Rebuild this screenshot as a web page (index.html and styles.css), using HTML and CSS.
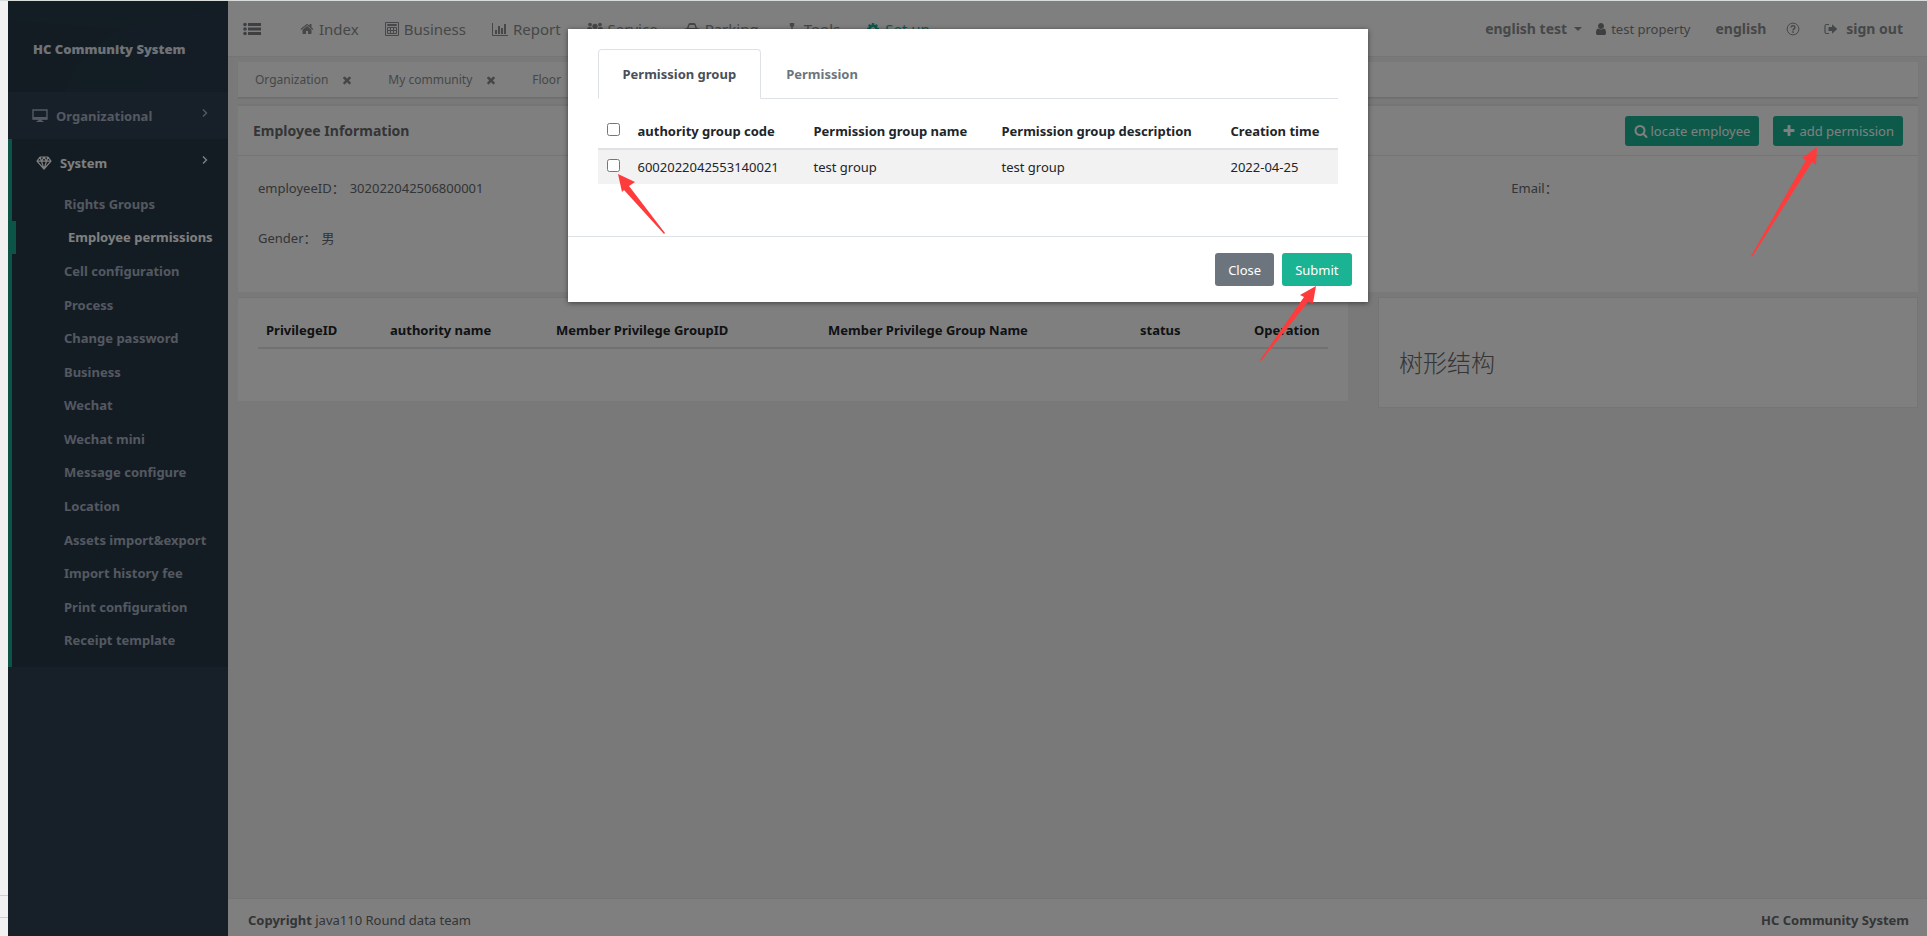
FILE: index.html
```html
<!DOCTYPE html>
<html lang="en">
<head>
  <meta charset="UTF-8" />
  <meta name="viewport" content="width=device-width, initial-scale=1.0" />
  <title>HC Community System</title>
  <link rel="stylesheet" href="styles.css">
</head>
<body>
  <div class="page-edge">
    <span class="edge-line"></span>
  </div>

  <div class="app">
    <nav class="sidebar">
      <div class="sidebar-header">
        <svg class="header-pattern" viewBox="0 0 220 91" preserveAspectRatio="none">
          <path d="M0 0H220V91H0z" fill="#263a48" />
          <path d="M0 20L110 28L70 62L56 91H0z" fill="#273646" />
          <path d="M110 28L220 0V91H156L135 62z" fill="#28394a" />
        </svg>
        <strong class="brand">HC Community System</strong>
      </div>
      <ul class="side-menu">
        <li class="menu-group">
          <a href="#" class="menu-link">
            <svg class="menu-icon" viewBox="0 0 16 14"><path d="M1 1h14v9H1z" fill="none" stroke="currentColor" stroke-width="1.4" /><path d="M1 8h14v2.500H1zM6 10h4v2h1.500v1h-7v-1H6z" /></svg>
            <span>Organizational</span>
            <svg class="menu-arrow" viewBox="0 0 6 10"><path d="M1 1.500l3.500 3.500L1 8.500" /></svg>
          </a>
        </li>
        <li class="menu-group active">
          <a href="#" class="menu-link">
            <svg class="menu-icon" viewBox="0 0 16 14"><path d="M4 1h8l3 4.200L8 13 1 5.200zM1 5.200h14M4 1l1.500 4.200L8 13l2.500-7.800L12 1M5.500 5.200L8 1l2.500 4.200" fill="none" stroke="currentColor" stroke-width="1.200" stroke-linejoin="round" /></svg>
            <span>System</span>
            <svg class="menu-arrow" viewBox="0 0 6 10"><path d="M1 1.500l3.500 3.500L1 8.500" /></svg>
          </a>
          <ul class="sub-menu">
            <li><a href="#">Rights Groups</a></li>
            <li class="current"><a href="#">Employee permissions</a></li>
            <li><a href="#">Cell configuration</a></li>
            <li><a href="#">Process</a></li>
            <li><a href="#">Change password</a></li>
            <li><a href="#">Business</a></li>
            <li><a href="#">Wechat</a></li>
            <li><a href="#">Wechat mini</a></li>
            <li><a href="#">Message configure</a></li>
            <li><a href="#">Location</a></li>
            <li><a href="#">Assets import&amp;export</a></li>
            <li><a href="#">Import history fee</a></li>
            <li><a href="#">Print configuration</a></li>
            <li><a href="#">Receipt template</a></li>
          </ul>
        </li>
      </ul>
    </nav>

    <div class="page">
      <header class="topbar">
        <button type="button" class="toggle" aria-label="Toggle menu">
          <svg viewBox="0 0 18 14"><path d="M5 1h13v3H5zM5 5.500h13v3H5zM5 10h13v3H5z" /><circle cx="2" cy="2.500" r="1.800" /><circle cx="2" cy="7" r="1.800" /><circle cx="2" cy="11.500" r="1.800" /></svg>
        </button>
        <nav class="top-menu">
          <a href="#"><svg class="icon" viewBox="0 0 1792 1792"><path d="M1472 992v480q0 26-19 45t-45 19h-384v-384h-256v384h-384q-26 0-45-19t-19-45v-480q0-1 .5-3t.5-3l575-474 575 474q1 2 1 6zm223-69l-62 74q-8 9-21 11h-3q-13 0-21-7l-692-577-692 577q-12 8-24 7-13-2-21-11l-62-74q-8-10-7-23.500t11-21.500l719-599q32-26 76-26t76 26l244 204v-195q0-14 9-23t23-9h192q14 0 23 9t9 23v408l219 182q10 8 11 21.500t-7 23.500z" /></svg>Index</a>
          <a href="#"><svg class="icon" viewBox="0 0 14 14"><path d="M.5.5h13v13H.5zM2.500 5.500h9v6h-9zM2.500 8.500h9M5.500 5.500v6M8.500 5.500v6M2.500 2.500h9v1h-9z" fill="none" stroke="currentColor" /></svg>Business</a>
          <a href="#"><svg class="icon wide" viewBox="0 0 16 14"><path d="M.5 1v12.500H16" fill="none" stroke="currentColor" /><path d="M3 8h2v4H3zM6 4h2v8H6zM9 6h2v6H9zM12 2h2v10h-2z" /></svg>Report</a>
          <a href="#"><svg class="icon wide" viewBox="0 0 16 14"><circle cx="3" cy="2.600" r="1.900" /><circle cx="13" cy="2.600" r="1.900" /><circle cx="8" cy="4.300" r="2.600" /><path d="M0 8q0-3 2-3l2.500.5Q5 7 6 7.500H3.500L2.500 9H1Q0 9 0 8zM16 8q0-3-2-3l-2.500.5Q11 7 10 7.500h2.500l1 1.500H15q1 0 1-1zM3.500 12q0-4.500 2.300-4.500Q8 9.500 10.200 7.500q2.300 0 2.300 4.500 0 2-1.500 2H5q-1.500 0-1.500-2z" /></svg>Service</a>
          <a href="#"><svg class="icon wide" viewBox="0 0 16 14"><path d="M1 6.500L3 6l1.200-3.500Q4.500 1 6 1h4q1.500 0 1.800 1.500L13 6l2 .5q1 .5 1 2V12h-2v1h-2v-1H4v1H2v-1H0V8.500q0-1.500 1-2zM4.600 6h6.800l-1-3H5.600z" /></svg>Parking</a>
          <a href="#"><svg class="icon" viewBox="0 0 14 14"><path d="M4.800 1h4.400v3.500H7.700V7h4.500v2.500h1.600v3.500H9.400V9.500h1.400V8.300H3.200v1.200h1.400V13H.2V9.500h1.600V7h4.500V4.500H4.800z" /></svg>Tools</a>
          <a href="#" class="selected"><svg class="icon" viewBox="0 0 1792 1792"><path d="M1152 896q0-106-75-181t-181-75-181 75-75 181 75 181 181 75 181-75 75-181zm512-109v222q0 12-8 23t-20 13l-185 28q-19 54-39 91 35 50 107 138 10 12 10 25t-9 23q-27 37-99 108t-94 71q-12 0-26-9l-138-108q-44 23-91 38-16 136-29 186-7 28-36 28h-222q-14 0-24.500-8.500t-11.500-21.500l-28-184q-49-16-90-37l-141 107q-10 9-25 9-14 0-25-11-126-114-165-168-7-10-7-23 0-12 8-23 15-21 51-66.500t54-70.500q-27-50-41-99l-183-27q-13-2-21-12.500t-8-23.500v-222q0-12 8-23t19-13l186-28q14-46 39-92-40-57-107-138-10-12-10-24 0-10 9-23 26-36 98.500-107.500t94.500-71.500q13 0 26 10l138 107q44-23 91-38 16-136 29-186 7-28 36-28h222q14 0 24.500 8.500t11.500 21.500l28 184q49 16 90 37l142-107q9-9 24-9 13 0 25 10 129 119 165 170 7 8 7 22 0 12-8 23-15 21-51 66.500t-54 70.500q26 50 41 98l183 28q13 2 21 12.500t8 23.500z" /></svg>Set up</a>
        </nav>
        <div class="user-menu">
          <a href="#" class="account">english test <span class="caret"></span></a>
          <a href="#" class="property"><svg class="icon" viewBox="0 0 1792 1792"><path d="M1536 1399q0 109-62.500 187t-150.500 78h-854q-88 0-150.500-78t-62.500-187q0-85 8.500-160.500t31.500-152 58.500-131 94-89 134.500-34.500q131 128 313 128t313-128q76 0 134.500 34.500t94 89 58.500 131 31.500 152 8.500 160.500zm-256-887q0 159-112.500 271.500t-271.500 112.500-271.500-112.500-112.500-271.500 112.500-271.500 271.500-112.500 271.500 112.500 112.500 271.500z" /></svg>test property</a>
          <a href="#">english</a>
          <a href="#" aria-label="Help"><svg class="icon" viewBox="0 0 14 14"><circle cx="7" cy="7" r="5.900" fill="none" stroke="currentColor" /><path d="M5 5.500Q5.200 3.700 7 3.700T9 5.400Q9 6.500 7.900 7T7 8.500" fill="none" stroke="currentColor" stroke-width="1.400" /><path d="M6.200 9.300h1.600v1.500H6.200z" /></svg></a>
          <a href="#" class="sign-out"><svg class="icon" viewBox="0 0 14 14"><path d="M5 2.500H2.500Q1 2.500 1 4v6q0 1.500 1.500 1.500H5" fill="none" stroke="currentColor" stroke-width="1.200" /><path d="M4.500 5H8V2.300L13.300 7 8 11.700V9H4.500z" /></svg>sign out</a>
        </div>
      </header>

      <div class="tab-strip">
        <a href="#">Organization <svg viewBox="0 0 1792 1792"><path d="M1490 1322q0 40-28 68l-136 136q-28 28-68 28t-68-28l-294-294-294 294q-28 28-68 28t-68-28l-136-136q-28-28-28-68t28-68l294-294-294-294q-28-28-28-68t28-68l136-136q28-28 68-28t68 28l294 294 294-294q28-28 68-28t68 28l136 136q28 28 28 68t-28 68l-294 294 294 294q28 28 28 68z" /></svg></a>
        <a href="#">My community <svg viewBox="0 0 1792 1792"><path d="M1490 1322q0 40-28 68l-136 136q-28 28-68 28t-68-28l-294-294-294 294q-28 28-68 28t-68-28l-136-136q-28-28-28-68t28-68l294-294-294-294q-28-28-28-68t28-68l136-136q28-28 68-28t68 28l294 294 294-294q28-28 68-28t68 28l136 136q28 28 28 68t-28 68l-294 294 294 294q28 28 28 68z" /></svg></a>
        <a href="#">Floor</a>
      </div>

      <main class="content">
        <section class="panel employee">
          <div class="panel-title">
            <h5>Employee Information</h5>
            <div class="tools">
              <button type="button" class="btn btn-primary btn-sm"><svg class="icon" viewBox="0 0 1792 1792"><path d="M1216 832q0-185-131.500-316.500t-316.500-131.500-316.500 131.500-131.500 316.500 131.500 316.500 316.500 131.500 316.500-131.500 131.500-316.500zm512 832q0 52-38 90t-90 38q-54 0-90-38l-343-342q-179 124-399 124-143 0-273.500-55.500t-225-150-150-225-55.500-273.500 55.500-273.500 150-225 225-150 273.500-55.500 273.500 55.500 225 150 150 225 55.500 273.500q0 220-124 399l343 343q37 37 37 90z" /></svg>locate employee</button>
              <div class="pointed">
                <button type="button" class="btn btn-primary btn-sm"><svg class="icon" viewBox="0 0 1792 1792"><path d="M1600 736v192q0 40-28 68t-68 28h-416v416q0 40-28 68t-68 28h-192q-40 0-68-28t-28-68v-416h-416q-40 0-68-28t-28-68v-192q0-40 28-68t68-28h416v-416q0-40 28-68t68-28h192q40 0 68 28t28 68v416h416q40 0 68 28t28 68z" /></svg>add permission</button>
                <svg class="pointer pointer-add" viewBox="0 0 66 110"><path d="M66 0L51 11l4 2L0 109l1 1L61 15l4 3z" /></svg>
              </div>
            </div>
          </div>
          <div class="info-grid">
            <div><span>employeeID：</span><span class="value">302022042506800001</span></div>
            <div class="info-email"><span>Email：</span></div>
            <div><span>Gender：</span><span class="value">男</span></div>
          </div>
        </section>

        <div class="columns">
          <section class="panel privileges">
            <table>
              <thead>
                <tr>
                  <th class="w-id">PrivilegeID</th>
                  <th class="w-name">authority name</th>
                  <th class="w-group-id">Member Privilege GroupID</th>
                  <th class="w-group-name">Member Privilege Group Name</th>
                  <th class="w-status">status</th>
                  <th>Operation</th>
                </tr>
              </thead>
            </table>
          </section>
          <section class="panel tree">
            <h2>树形结构</h2>
          </section>
        </div>
      </main>

      <footer class="footer">
        <div><strong>Copyright</strong> java110 Round data team</div>
        <strong>HC Community System</strong>
      </footer>
    </div>

    <div class="modal-layer">
      <div class="modal" role="dialog" aria-modal="true">
        <div class="modal-body">
          <div class="tabs">
            <button type="button" class="tab active">Permission group</button>
            <button type="button" class="tab">Permission</button>
          </div>
          <table class="group-table">
            <thead>
              <tr>
                <th class="w-check"><input type="checkbox" aria-label="Select all"></th>
                <th class="w-code">authority group code</th>
                <th class="w-gname">Permission group name</th>
                <th class="w-desc">Permission group description</th>
                <th>Creation time</th>
              </tr>
            </thead>
            <tbody>
              <tr>
                <td>
                  <div class="pointed">
                    <input type="checkbox" aria-label="Select test group">
                    <svg class="pointer pointer-check" viewBox="0 0 48 60"><path d="M0 0l17 8-6 4 36 47-1 1L6 16l-2 2z" /></svg>
                  </div>
                </td>
                <td>6002022042553140021</td>
                <td>test group</td>
                <td>test group</td>
                <td>2022-04-25</td>
              </tr>
            </tbody>
          </table>
        </div>
        <div class="modal-footer">
          <button type="button" class="btn btn-secondary">Close</button>
          <div class="pointed">
            <button type="button" class="btn btn-primary">Submit</button>
            <svg class="pointer pointer-submit" viewBox="0 0 56 75"><path d="M56 0L40 9l4 2L0 74l1 1L48 16l5 1z" /></svg>
          </div>
        </div>
      </div>
    </div>
  </div>
</body>
</html>
```
FILE: styles.css
```css
* {
  box-sizing: border-box;
}
body {
  display: flex;
  margin: 0;
  min-height: 100vh;
  border-top: 1px solid #d8dcda;
  background: #f1f1f1;
  color: #676a6c;
  font-family: "Noto Sans", "Noto Sans CJK SC", sans-serif;
  font-size: 13px;
  line-height: 20px;
}
a {
  color: inherit;
  text-decoration: none;
}
ul {
  margin: 0;
  padding: 0;
  list-style: none;
}
h2, h5 {
  margin: 0;
}
svg {
  fill: currentColor;
}
button {
  font: inherit;
  cursor: pointer;
}
table {
  width: 100%;
  border-collapse: collapse;
  color: #212529;
  line-height: 18px;
}
th, td {
  padding: 8px;
  text-align: left;
  white-space: nowrap;
}

/* window edge */
.page-edge {
  display: flex;
  flex-direction: column;
  justify-content: flex-end;
  width: 8px;
  padding-bottom: 18px;
}
.edge-line {
  height: 23px;
  border-top: 1px solid #cfcfcf;
  border-bottom: 1px solid #cfcfcf;
}
.app {
  position: relative;
  display: flex;
  flex: 1;
}

/* sidebar */
.sidebar {
  width: 220px;
  background: #2f4050;
  color: #a7b1c2;
  font-weight: bold;
}
.sidebar-header {
  display: flex;
  align-items: center;
  position: relative;
  height: 91px;
  padding: 4px 25px 0;
}
.header-pattern {
  position: absolute;
  inset: 0;
  width: 100%;
  height: 100%;
}
.brand {
  position: relative;
  color: #dfe4ed;
}
.menu-link {
  display: flex;
  align-items: center;
  height: 47px;
  padding: 0 20px 0 24px;
}
.menu-icon {
  width: 16px;
  height: 14px;
  margin-right: 8px;
}
.menu-arrow {
  width: 6px;
  height: 10px;
  margin: 0 0 6px auto;
  fill: none;
  stroke: currentColor;
  stroke-width: 1.4;
}
.menu-group.active {
  padding-bottom: 10px;
  border-left: 4px solid #19aa8d;
  background: #293846;
}
.menu-group.active > .menu-link {
  color: #fff;
}
.sub-menu {
  display: flex;
  flex-direction: column;
  height: 470px;
  margin-top: 1px;
}
.sub-menu li {
  display: flex;
  flex: 1;
  align-items: center;
  padding-left: 52px;
  white-space: nowrap;
}
.sub-menu .current {
  border-left: 4px solid #19aa8d;
  color: #fff;
}

/* page */
.page {
  display: flex;
  flex: 1;
  flex-direction: column;
  min-width: 0;
  background: #f3f3f4;
}
.topbar {
  display: flex;
  align-items: center;
  height: 56px;
  padding: 0 24px 0 15px;
  border-bottom: 1px solid #e7eaec;
  background: #fff;
  color: #8c8f91;
  font-size: 15px;
}
.toggle {
  display: flex;
  margin-right: 26px;
  padding: 0;
  border: 0;
  background: none;
  color: #7c7f81;
}
.toggle svg {
  width: 18px;
  height: 14px;
}
.icon {
  flex: none;
  width: 14px;
  height: 14px;
}
.icon.wide {
  width: 16px;
}
.top-menu {
  display: flex;
}
.top-menu a {
  display: flex;
  align-items: center;
  gap: 5px;
  padding: 0 13px;
}
.top-menu .selected {
  color: #1ab394;
}
.user-menu {
  display: flex;
  align-items: center;
  margin-left: auto;
  font-size: 14px;
  font-weight: bold;
}
.user-menu a {
  display: flex;
  align-items: center;
  margin-left: 20px;
}
.user-menu .account {
  gap: 7px;
}
.caret {
  border: 4px solid transparent;
  border-top-color: currentColor;
  border-bottom: 0;
}
.user-menu .property {
  gap: 3px;
  margin: 0 5px 0 12px;
  color: #7c7f81;
  font-size: 13px;
  font-weight: normal;
}
.user-menu .sign-out {
  gap: 8px;
  margin-left: 24px;
}
.tab-strip {
  display: flex;
  align-items: center;
  gap: 35px;
  height: 36px;
  margin: 5px 9px 0 10px;
  padding: 0 17px;
  border-bottom: 1px solid #dcdcdc;
  background: #fff;
  color: #8c8f91;
  font-size: 12px;
  box-shadow: 0 1px 1px #e4e4e4;
}
.tab-strip a {
  display: flex;
  align-items: center;
  gap: 13px;
}
.tab-strip svg {
  width: 12px;
  height: 12px;
}
.content {
  flex: 1;
  padding: 6px 9px 0 10px;
}
.panel {
  background: #fff;
}
.employee {
  border-top: 2px solid #e7eaec;
}
.panel-title {
  display: flex;
  align-items: center;
  justify-content: space-between;
  height: 50px;
  padding: 0 15px;
  border-bottom: 1px solid #e7eaec;
}
.panel-title h5 {
  font-size: 14px;
}
.tools {
  display: flex;
  gap: 14px;
}
.btn {
  display: flex;
  align-items: center;
  height: 33px;
  padding: 0 13px;
  border: 0;
  border-radius: 3px;
  color: #fff;
}
.btn-sm {
  gap: 3px;
  height: 30px;
  padding: 0 9px;
}
.btn-primary {
  background: #1ab394;
}
.btn-secondary {
  background: #6c757d;
}
.info-grid {
  display: grid;
  grid-template-columns: repeat(4, 1fr);
  row-gap: 30px;
  height: 136px;
  margin-right: -11px;
  padding: 22px 0 0 20px;
  align-content: start;
}
.info-grid .value {
  margin-left: 5px;
}
.info-email {
  grid-column: 4;
}
.columns {
  display: grid;
  grid-template-columns: 1110fr 540fr;
  gap: 30px;
  align-items: start;
  margin-top: 5px;
}
.privileges {
  height: 104px;
  padding: 15px 20px 0;
  border-top: 1px solid #e7eaec;
}
.privileges th {
  border-bottom: 2px solid #dee2e6;
}
.w-id { width: 124px; }
.w-name { width: 166px; }
.w-group-id { width: 272px; }
.w-group-name { width: 312px; }
.w-status { width: 114px; }
.tree {
  height: 111px;
  padding: 50px 20px 0;
  border: 1px solid #e7eaec;
}
.tree h2 {
  font-size: 24px;
  font-weight: 300;
  line-height: 30px;
}
.footer {
  display: flex;
  align-items: center;
  justify-content: space-between;
  height: 38px;
  padding: 4px 18px 0 20px;
  border-top: 1px solid #e7eaec;
  background: #fff;
}

/* dialog */
.modal-layer {
  position: absolute;
  inset: 0;
  display: flex;
  align-items: flex-start;
  justify-content: center;
  padding-top: 28px;
  background: rgba(0, 0, 0, 0.5);
}
.modal {
  width: 800px;
  background: #fff;
  box-shadow: 0 1px 5px rgba(0, 0, 0, 0.5);
}
.modal-body {
  height: 207px;
  padding: 20px 30px;
}
.tabs {
  display: flex;
  height: 50px;
  border-bottom: 1px solid #dee2e6;
}
.tab {
  margin-bottom: -1px;
  padding: 0 24px;
  border: 1px solid transparent;
  background: none;
  color: #6c757d;
  font-weight: bold;
}
.tab.active {
  border-color: #dee2e6 #dee2e6 #fff;
  border-radius: 4px 4px 0 0;
  background: #fff;
  color: #495057;
}
.group-table {
  margin-top: 15px;
}
.group-table thead th {
  border-bottom: 2px solid #dee2e6;
}
.group-table tbody tr {
  background: #f2f2f2;
}
.group-table input {
  display: block;
  width: 13px;
  height: 13px;
  margin: 0 0 4px 1px;
}
.w-check { width: 32px; }
.w-code { width: 176px; }
.w-gname { width: 188px; }
.w-desc { width: 229px; }
.modal-footer {
  display: flex;
  justify-content: flex-end;
  gap: 8px;
  padding: 16px;
  border-top: 1px solid #dee2e6;
}

/* red arrows lie over the controls they point at */
.pointed {
  position: relative;
}
.pointer {
  position: absolute;
  z-index: 2;
  fill: #ff3b3b;
  pointer-events: none;
}
.pointer-add {
  top: 31px;
  right: 86px;
  width: 66px;
  height: 110px;
}
.pointer-check {
  top: 15px;
  left: 12px;
  width: 48px;
  height: 60px;
}
.pointer-submit {
  top: 33px;
  right: 36px;
  width: 56px;
  height: 75px;
}
```
